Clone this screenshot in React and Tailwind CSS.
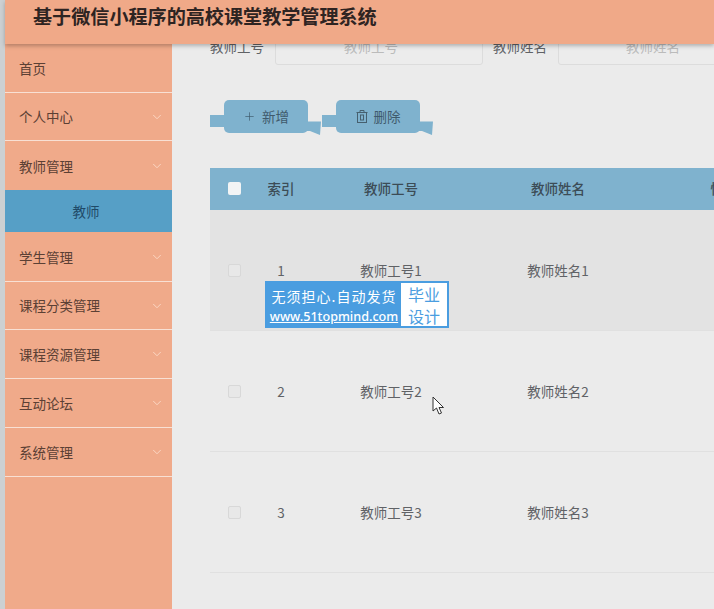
import { ChevronDown, Plus } from 'lucide-react';

const menu = [
  { name: '首页' },
  { name: '个人中心', arrow: true },
  { name: '教师管理', arrow: true, sub: ['教师'] },
  { name: '学生管理', arrow: true },
  { name: '课程分类管理', arrow: true },
  { name: '课程资源管理', arrow: true },
  { name: '互动论坛', arrow: true },
  { name: '系统管理', arrow: true },
];

const rows = [
  { id: 1, no: '教师工号1', name: '教师姓名1' },
  { id: 2, no: '教师工号2', name: '教师姓名2' },
  { id: 3, no: '教师工号3', name: '教师姓名3' },
];

const cols = 'grid grid-cols-[49px_44px_176px_158px_174px] items-center w-[601px]';

function Ribbon({ icon, label }) {
  return (
    <button className="relative flex h-[33px] w-[84px] items-center justify-center gap-[6px] rounded-[5px] bg-[#7fb2ce] text-[13.5px] text-[#3f5a6c]">
      <span className="absolute left-[-14px] top-[15px] h-[12px] w-[14px] bg-[#7fb2ce]" />
      <svg className="absolute left-[80px] top-[20px]" width="18" height="15" viewBox="0 0 18 15">
        <path d="M0 1.5H17L16 15L6 11H0Z" fill="#7fb2ce" />
      </svg>
      {icon}
      <span className="relative">{label}</span>
    </button>
  );
}

function TrashIcon() {
  return (
    <svg width="12" height="13" viewBox="0 0 12 13" fill="none" stroke="#46606f" strokeWidth="1">
      <path d="M0.5 2.5H11.5M4 2.5V0.5H8V2.5" />
      <rect x="1.5" y="2.5" width="9" height="10" />
      <rect x="4.5" y="5" width="3" height="5" />
    </svg>
  );
}

export default function App() {
  return (
    <div className="relative flex h-[609px] w-[714px] overflow-hidden bg-[#ebebeb] font-['Noto_Sans_CJK_SC','Liberation_Sans',sans-serif]">
      <div className="w-[5px] shrink-0 bg-[#ccd0d2]" />
      <div className="flex min-w-0 flex-1 flex-col">
        <header className="relative z-10 h-[44px] shrink-0 bg-[#f0a988] pl-[28px] shadow-[0_2px_4px_rgba(0,0,0,0.25)]">
          <h1 className="text-[19.1px] leading-[33px] font-bold whitespace-nowrap text-[#2e2422]">基于微信小程序的高校课堂教学管理系统</h1>
        </header>
        <div className="flex min-h-0 flex-1">
          <aside className="w-[167px] shrink-0 bg-[#f0aa8a]">
            {menu.map((m) => (
              <div key={m.name}>
                <div className={`flex h-[48.7px] items-center justify-between pr-[8px] pl-[14px] text-[13.5px] text-[#5b4034] ${m.sub ? '' : 'border-b border-[#f8e0d4]'}`}>
                  <span>{m.name}</span>
                  {m.arrow && <ChevronDown size={14} strokeWidth={1.5} className="text-[#fbdcca]" />}
                </div>
                {m.sub && m.sub.map((s) => (
                  <div key={s} className="mb-px flex h-[42px] items-center justify-center bg-[#569fc6] pr-[5px] text-[13.5px] text-[#1f4a68]">{s}</div>
                ))}
              </div>
            ))}
          </aside>
          <main className="min-w-0 flex-1 overflow-hidden pl-[38px]">
            <div className="-mt-[14px] flex h-[35px] w-[600px] items-center text-[13.5px] text-[#606266]">
              <span className="mb-[2px] w-[65px] shrink-0">教师工号</span>
              <div className="flex h-[35px] w-[208px] shrink-0 items-center justify-center rounded-[3px] border border-[#dcdcdc] bg-[#ececec] pr-[16px] pb-[2px] text-[#bbbbbb]">教师工号</div>
              <span className="mb-[2px] w-[75px] shrink-0 pl-[10px]">教师姓名</span>
              <div className="flex h-[35px] w-[200px] shrink-0 items-center justify-center rounded-[3px] border border-[#dcdcdc] bg-[#ececec] pr-[10px] pb-[2px] text-[#bbbbbb]">教师姓名</div>
            </div>
            <div className="mt-[35px] flex gap-[28px] pl-[14px]">
              <Ribbon label="新增" icon={<Plus size={13} strokeWidth={1.25} className="relative" />} />
              <Ribbon label="删除" icon={<TrashIcon />} />
            </div>
            <div className="mt-[35px] w-[601px]">
              <div className={`${cols} h-[42px] bg-[#7fb2ce] pb-px text-[13.5px] font-medium text-[#3c4c56]`}>
                <div className="flex justify-center"><span className="h-[13px] w-[13px] rounded-[2px] bg-[#f2f4f5]" /></div>
                <div className="text-center">索引</div>
                <div className="text-center">教师工号</div>
                <div className="text-center">教师姓名</div>
                <div className="text-center">性别</div>
              </div>
              {rows.map((r, i) => (
                <div key={r.id} className={`${cols} h-[121px] border-b border-[#e0e0e0] text-[13.5px] text-[#606266] ${i === 0 ? 'bg-[#e3e3e3]' : ''}`}>
                  <div className="flex justify-center"><span className="h-[13px] w-[13px] rounded-[2px] border border-[#d8d8d8] bg-[#e8e8e8]" /></div>
                  <div className="text-center">{r.id}</div>
                  <div className="text-center">{r.no}</div>
                  <div className="text-center">{r.name}</div>
                  <div />
                </div>
              ))}
            </div>
          </main>
        </div>
      </div>

      {/* watermark over the table */}
      <div className="absolute top-[281px] left-[265px] z-20 flex h-[47px] w-[184px] bg-[#4a9de0] p-[2px] text-white">
        <div className="flex w-[134px] flex-col items-center pt-[2px]">
          <span className="text-[14px] leading-[22px] tracking-[1px] whitespace-nowrap">无须担心.自动发货</span>
          <span className="font-['Noto_Sans',sans-serif] text-[12.6px] leading-[19px] font-medium whitespace-nowrap underline">www.51topmind.com</span>
        </div>
        <div className="flex flex-1 flex-col items-center bg-white text-[16px] leading-[22px] text-[#4a9de0]">
          <span>毕业</span>
          <span>设计</span>
        </div>
      </div>

      {/* mouse cursor */}
      <svg className="absolute top-[396px] left-[432px] z-20" width="13" height="19" viewBox="0 0 13 19">
        <path d="M1 1V15L4.5 12L7 18L9.5 17L7 11.5H11.5Z" fill="#fff" stroke="#333" strokeWidth="1" strokeLinejoin="round" />
      </svg>
    </div>
  );
}
